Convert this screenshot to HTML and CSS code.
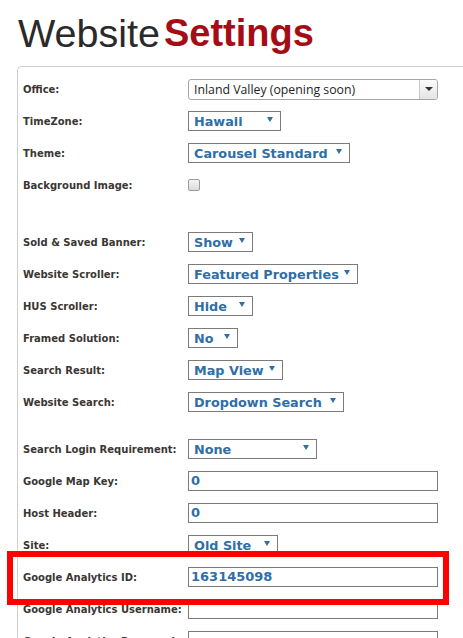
FILE: index.html
```html
<!DOCTYPE html>
<html>
<head>
<meta charset="utf-8">
<link rel="stylesheet" href="styles.css">
</head>
<body>
<div class="page">
  <h1 class="title"><span class="t-light">Website</span><span class="t-bold">Settings</span></h1>
  <div class="panel">
    <div class="row"><span class="label">Office:</span>
      <div class="office"><span class="office-text">Inland Valley (opening soon)</span><span class="office-btn"><span class="tri-dark"></span></span></div></div>
    <div class="row"><span class="label">TimeZone:</span><div class="sel w-tz"><span>Hawaii</span><span class="tri"></span></div></div>
    <div class="row"><span class="label">Theme:</span><div class="sel w-theme"><span>Carousel Standard</span><span class="tri"></span></div></div>
    <div class="row"><span class="label">Background Image:</span><span class="check"></span></div>

    <div class="row gap-lg"><span class="label">Sold &amp; Saved Banner:</span><div class="sel w-sold"><span>Show</span><span class="tri"></span></div></div>
    <div class="row"><span class="label">Website Scroller:</span><div class="sel w-scroll"><span>Featured Properties</span><span class="tri"></span></div></div>
    <div class="row"><span class="label">HUS Scroller:</span><div class="sel w-hus"><span>Hide</span><span class="tri"></span></div></div>
    <div class="row"><span class="label">Framed Solution:</span><div class="sel w-framed"><span>No</span><span class="tri"></span></div></div>
    <div class="row"><span class="label">Search Result:</span><div class="sel w-result"><span>Map View</span><span class="tri"></span></div></div>
    <div class="row"><span class="label">Website Search:</span><div class="sel w-search"><span>Dropdown Search</span><span class="tri"></span></div></div>

    <div class="row gap-md"><span class="label">Search Login Requirement:</span><div class="sel w-login"><span>None</span><span class="tri"></span></div></div>
    <div class="row"><span class="label">Google Map Key:</span><div class="input">0</div></div>
    <div class="row"><span class="label">Host Header:</span><div class="input">0</div></div>
    <div class="row"><span class="label">Site:</span><div class="sel w-site"><span>Old Site</span><span class="tri"></span></div></div>
    <div class="row"><span class="label">Google Analytics ID:</span><div class="input">163145098</div></div>
    <div class="row"><span class="label">Google Analytics Username:</span><div class="input"></div></div>
    <div class="row"><span class="label">Google Analytics Password:</span><div class="input"></div></div>
  </div>
</div>
<div class="highlight"></div>
</body>
</html>
```

FILE: styles.css
```css
html, body {
  margin: 0;
  padding: 0;
  overflow: hidden;
  background: #fff;
}
body {
  width: 463px;
  height: 638px;
  position: relative;
}
.page {
  padding-left: 17px;
}
.title {
  margin: 0;
  padding-top: 14px;
  height: 39px;
  margin-bottom: 13px;
  font-family: "Liberation Sans", Arial, sans-serif;
  font-size: 39.5px;
  line-height: 39px;
  display: flex;
  gap: 4px;
  padding-left: 1px;
}
.t-light {
  font-weight: normal;
  color: #2a2a2a;
}
.t-bold {
  font-weight: bold;
  color: #a50c16;
  font-size: 38px;
}
.panel {
  border: 1px solid #cfcfcf;
  border-right: none;
  border-bottom: none;
  border-top-left-radius: 5px;
  margin-right: -20px;
  padding: 6px 0 0 5px;
  height: 600px;
}
.row {
  display: grid;
  grid-template-columns: 165px 1fr;
  align-items: center;
  height: 32px;
}
.gap-lg { margin-top: 25px; }
.gap-md { margin-top: 15px; }
.label {
  font-family: "DejaVu Sans", Verdana, sans-serif;
  font-weight: bold;
  font-size: 10px;
  color: #3a3633;
  white-space: nowrap;
}
.office {
  box-sizing: border-box;
  width: 250px;
  height: 21px;
  border: 1px solid #a6a6a6;
  border-radius: 3px;
  display: flex;
  align-items: center;
  justify-content: space-between;
  overflow: hidden;
}
.office-text {
  font-family: "Open Sans", "Noto Sans", sans-serif;
  font-size: 12.3px;
  color: #1e1e1e;
  padding-left: 5px;
}
.office-btn {
  align-self: stretch;
  width: 17px;
  border-left: 1px solid #c8c8c8;
  background: linear-gradient(#fbfbfb, #e4e4e4);
  display: flex;
  align-items: center;
  justify-content: center;
}
.tri-dark {
  width: 0;
  height: 0;
  border-left: 4px solid transparent;
  border-right: 4px solid transparent;
  border-top: 4px solid #333;
}
.sel {
  box-sizing: border-box;
  height: 20px;
  border: 1px solid #7b7b7b;
  display: flex;
  align-items: center;
  justify-content: space-between;
  padding: 0 7px 0 5px;
  font-family: "DejaVu Sans", Verdana, sans-serif;
  font-weight: bold;
  font-size: 12.8px;
  color: #2f6ea6;
  white-space: nowrap;
}
.tri {
  width: 0;
  height: 0;
  border-left: 3px solid transparent;
  border-right: 3px solid transparent;
  border-top: 5px solid #2f6ea6;
  margin-top: -3px;
}
.w-tz { width: 93px; }
.w-theme { width: 162px; }
.w-sold { width: 65px; }
.w-scroll { width: 170px; }
.w-hus { width: 65px; }
.w-framed { width: 50px; }
.w-result { width: 95px; }
.w-search { width: 156px; }
.w-login { width: 129px; }
.w-site { width: 90px; }
.check {
  box-sizing: border-box;
  width: 12px;
  height: 12px;
  border: 1px solid #9c9c9c;
  border-radius: 2px;
  background: linear-gradient(#f6f6f6, #dadada);
}
.input {
  box-sizing: border-box;
  width: 250px;
  height: 20px;
  border: 1px solid #7b7b7b;
  padding-left: 2px;
  font-family: "DejaVu Sans", Verdana, sans-serif;
  font-weight: bold;
  font-size: 13px;
  line-height: 18px;
  color: #2f6ea6;
}
.highlight {
  position: absolute;
  left: 7px;
  top: 551px;
  width: 442px;
  height: 54px;
  box-sizing: border-box;
  border: 6px solid #ff0000;
}
```
